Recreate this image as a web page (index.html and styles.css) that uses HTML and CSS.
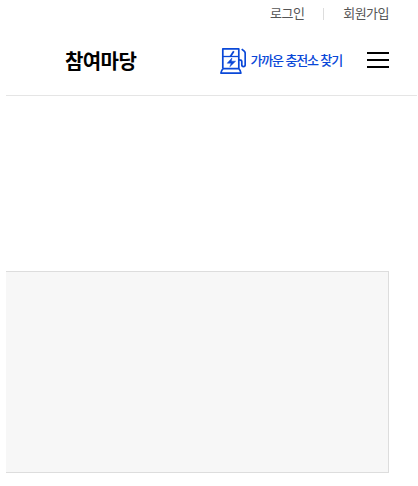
FILE: index.html
```
<!DOCTYPE html>
<html lang="ko">
<head>
<meta charset="utf-8">
<title>참여마당</title>
<link rel="stylesheet" href="styles.css">
</head>
<body>
<header class="header">
  <nav class="util">
    <a class="util-link">로그인</a>
    <span class="divider"></span>
    <a class="util-link">회원가입</a>
  </nav>
  <div class="main-nav">
    <a class="menu-title">참여마당</a>
    <a class="station">
      <svg class="pump" viewBox="0 0 26 26" width="26" height="26" fill="none" stroke="#0a48d8" stroke-width="1.7" stroke-linejoin="round">
        <path d="M2.8 20.5V.9h16v19.6"/>
        <path d="M3 8.5h16" stroke-width="1.3"/>
        <path d="M3.2 20.6h15.6q1.8 1.6 2.1 4.5H.9q.3-2.9 2.3-4.5z"/>
        <path d="M13.8 3.2l-3.4 5.2" stroke-width="1.8"/>
        <path d="M11.9 10l-4.7 5.2h4l-1.4 3.6 5.8-5.6h-4.3z" fill="#0a48d8" stroke="#0a48d8" stroke-width=".5"/>
        <path d="M21.7 1.1l2.5 2.1q1 .9 1 2.3v11.3q0 1.8-1.7 1.8t-1.7-1.8v-3.4q0-1.6-3-1.6"/>
      </svg>
      <span class="station-label">가까운 충전소 찾기</span>
    </a>
    <button class="burger" aria-label="메뉴"><span class="bar"></span><span class="bar"></span><span class="bar"></span></button>
  </div>
</header>
<main class="panel"></main>
</body>
</html>
```
FILE: styles.css
```
* { box-sizing: border-box; }
body {
  margin: 0;
  background: #fff;
  font-family: "Noto Sans CJK KR", sans-serif;
}
.header {
  margin: 0 1px 0 6px;
  height: 96px;
  border-bottom: 1px solid #e5e5e5;
}
.util {
  display: flex;
  align-items: center;
  height: 26px;
  padding-left: 264px;
  font-size: 13px;
  line-height: 26px;
  letter-spacing: -0.5px;
  color: #555;
  white-space: nowrap;
}
.divider {
  width: 1px;
  height: 12px;
  margin: 2px 19.5px 0 18.3px;
  background: #ddd;
}
.main-nav {
  display: flex;
  align-items: center;
  height: 68px;
  padding-left: 59px;
}
.menu-title {
  width: 155px;
  font-size: 20px;
  font-weight: 700;
  letter-spacing: -0.6px;
  color: #000;
  white-space: nowrap;
}
.station {
  display: flex;
  align-items: center;
  gap: 4.5px;
  width: 147px;
  color: #0a48d8;
}
.pump {
  flex: none;
  margin-top: 2px;
}
.station-label {
  margin-top: -2px;
  font-size: 13px;
  font-weight: 500;
  letter-spacing: -1.15px;
  white-space: nowrap;
}
.burger {
  display: flex;
  flex-direction: column;
  gap: 5px;
  width: 22px;
  padding: 0;
  border: 0;
  background: none;
}
.bar {
  width: 22px;
  height: 2px;
  background: #000;
}
.panel {
  width: 383px;
  height: 202px;
  margin: 175px 0 0 6px;
  border: 1px solid #ddd;
  border-left: 0;
  background: #f7f7f7;
}
```
